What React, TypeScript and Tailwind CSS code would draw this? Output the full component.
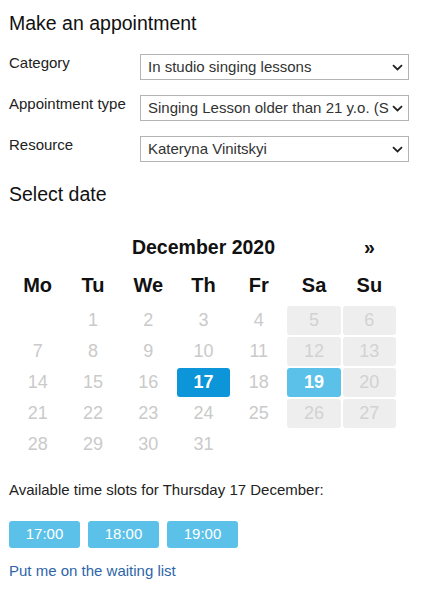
import React from 'react';

const weeks: (number | null)[][] = [
  [null, 1, 2, 3, 4, 5, 6],
  [7, 8, 9, 10, 11, 12, 13],
  [14, 15, 16, 17, 18, 19, 20],
  [21, 22, 23, 24, 25, 26, 27],
  [28, 29, 30, 31, null, null, null],
];

const dayNames = ['Mo', 'Tu', 'We', 'Th', 'Fr', 'Sa', 'Su'];

const Chevron = () => (
  <svg width="11" height="7" viewBox="0 0 11 7" className="shrink-0">
    <path d="M1 1.2 L5.5 5.5 L10 1.2" fill="none" stroke="#222" strokeWidth="1.8" />
  </svg>
);

const SelectBox = ({ value }: { value: string }) => (
  <div className="flex h-[26px] w-[269px] items-center border border-[#b4b4b4] bg-white pl-[7px] pr-[5px]">
    <div className="min-w-0 flex-1 overflow-hidden whitespace-nowrap text-[15px] leading-[18px] text-[#333]">
      {value}
    </div>
    <div className="ml-[3px] flex items-center">
      <Chevron />
    </div>
  </div>
);

const FormRow = ({ label, value }: { label: string; value: string }) => (
  <div className="flex items-start">
    <div className="w-[131px] text-[15px] leading-[18px] text-[#222]">{label}</div>
    <SelectBox value={value} />
  </div>
);

const DayCell = ({ day, col }: { day: number | null; col: number }) => {
  const weekend = col >= 5;
  if (day === null) return <div className="h-[29px]" />;
  let cls = 'text-[#cacaca]';
  if (weekend) cls = 'bg-[#eeeeee] text-[#d2d2d2]';
  if (day === 17) cls = 'bg-[#0c95d8] text-white font-bold';
  if (day === 19) cls = 'bg-[#5cc1e9] text-white font-bold';
  return (
    <div className={`flex h-[29px] items-center justify-center rounded-[3px] text-[18px] ${cls}`}>
      {day}
    </div>
  );
};

export default function App() {
  return (
    <div className="min-h-[592px] w-[433px] bg-white px-[9px] font-['Liberation_Sans',Arial,sans-serif]">
      <h1 className="pt-[11px] text-[19.5px] leading-[24px] text-[#111]">Make an appointment</h1>

      <div className="mt-[19px] flex flex-col gap-[15px]">
        <FormRow label="Category" value="In studio singing lessons" />
        <FormRow label="Appointment type" value="Singing Lesson older than 21 y.o. (Standard)" />
        <FormRow label="Resource" value="Kateryna Vinitskyi" />
      </div>

      <h2 className="mt-[20px] text-[19.5px] leading-[24px] text-[#111]">Select date</h2>

      <div className="ml-[2px] mt-[29px] w-[385px]">
        <div className="grid grid-cols-7 gap-x-[2px] text-[19.5px] font-bold leading-[24px] text-[#111]">
          <div />
          <div className="col-span-5 text-center">December 2020</div>
          <div className="text-center">»</div>
        </div>

        <div className="mt-[14px] grid grid-cols-7 gap-x-[2px] text-[20px] font-bold leading-[24px] text-[#111]">
          {dayNames.map((d) => (
            <div key={d} className="text-center">{d}</div>
          ))}
        </div>

        <div className="mt-[9px] grid grid-cols-7 gap-[2px]">
          {weeks.map((week, wi) =>
            week.map((day, ci) => <DayCell key={`${wi}-${ci}`} day={day} col={ci} />)
          )}
        </div>
      </div>

      <p className="mt-[22px] text-[15px] leading-[18px] text-[#222]">
        Available time slots for Thursday 17 December:
      </p>

      <div className="mt-[22px] flex gap-[8px]">
        {['17:00', '18:00', '19:00'].map((t) => (
          <button
            key={t}
            className="flex h-[27px] w-[71px] items-center justify-center rounded-[3px] bg-[#5cc1e9] text-[15px] text-white"
          >
            {t}
          </button>
        ))}
      </div>

      <a className="mt-[14px] block text-[15px] leading-[18px] text-[#2d66a8]" href="#">
        Put me on the waiting list
      </a>
    </div>
  );
}
